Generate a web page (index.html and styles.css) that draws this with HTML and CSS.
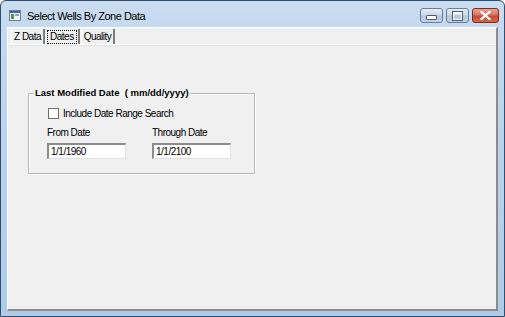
FILE: index.html
```html
<!DOCTYPE html>
<html>
<head>
  <title>Select Wells By Zone Data</title>
  <link rel="stylesheet" href="styles.css">
</head>
<body>
  <div class="window">
    <div class="titlebar">
      <svg class="app-icon" width="12" height="11" viewBox="0 0 12 11">
        <rect x="0.5" y="0.5" width="11" height="10" fill="#f4f6f8" stroke="#6c7c8c"/>
        <rect x="1" y="1" width="10" height="2" fill="#3a6ab0"/>
        <rect x="2" y="4" width="3" height="5" fill="#3f9a48"/>
        <rect x="6" y="4" width="4" height="2" fill="#8aa0b8"/>
      </svg>
      <span class="title">Select Wells By Zone Data</span>
      <div class="controls">
        <div class="ctl ctl-min"><span class="min-bar"></span></div>
        <div class="ctl ctl-max"><span class="max-box"></span></div>
        <div class="ctl ctl-close">
          <svg width="11" height="9" viewBox="0 0 11 9">
            <path d="M1.5 1 L9.5 8 M9.5 1 L1.5 8" stroke="#ffffff" stroke-width="2.2" stroke-linecap="square"/>
          </svg>
        </div>
      </div>
    </div>
    <div class="client">
      <div class="tabs">
        <div class="tab">Z Data</div>
        <div class="tab tab-active"><span class="focus">Dates</span></div>
        <div class="tab">Quality</div>
      </div>
      <div class="page">
        <fieldset class="group">
          <legend>Last Modified Date&nbsp; ( mm/dd/yyyy)</legend>
          <label class="check-row">
            <span class="checkbox"></span>
            Include Date Range Search
          </label>
          <div class="date-row">
            <div class="date-field">
              <div class="field-label">From Date</div>
              <div class="textbox">1/1/1960</div>
            </div>
            <div class="date-field">
              <div class="field-label">Through Date</div>
              <div class="textbox">1/1/2100</div>
            </div>
          </div>
        </fieldset>
      </div>
    </div>
  </div>
</body>
</html>
```

FILE: styles.css
```css
body {
  margin: 0;
  padding: 0;
  font-family: "Liberation Sans", Arial, sans-serif;
  font-size: 10px;
  letter-spacing: -0.5px;
  color: #000000;
  background-color: #ffffff;
}

.window {
  width: 505px;
  height: 317px;
  box-sizing: border-box;
  border: 1px solid #2f4d6c;
  border-radius: 6px 6px 0 0;
  background: linear-gradient(to bottom, #c9dcf0 0%, #bed5ed 30%, #afcbe8 100%);
  display: flex;
  flex-direction: column;
}

.titlebar {
  height: 25px;
  display: flex;
  align-items: center;
  padding-left: 8px;
  padding-right: 5px;
}

.app-icon {
  margin-top: 4px;
}

.title {
  margin-left: 6px;
  margin-top: 4px;
  font-size: 11px;
  letter-spacing: -0.5px;
}

.controls {
  margin-left: auto;
  display: flex;
  align-self: flex-start;
  margin-top: 7px;
  gap: 3px;
}

.ctl {
  height: 15px;
  box-sizing: border-box;
  border: 1px solid #6d7f95;
  border-radius: 3px;
  display: flex;
  align-items: center;
  justify-content: center;
  background: linear-gradient(to bottom, #e4edf7 0%, #c9d8ea 48%, #b3c7de 52%, #bfd2e8 100%);
}

.ctl-min,
.ctl-max {
  width: 23px;
}

.ctl-close {
  width: 27px;
  border-color: #7a2b20;
  background: linear-gradient(to bottom, #e8a494 0%, #d7705b 48%, #c64a2f 52%, #d2694c 100%);
}

.min-bar {
  width: 9px;
  height: 3px;
  margin-top: 4px;
  background-color: #ffffff;
  border: 1px solid #4c5d72;
  border-radius: 1px;
}

.max-box {
  width: 7px;
  height: 5px;
  border: 1px solid #ffffff;
  border-top-width: 2px;
  outline: 1px solid #4c5d72;
}

.client {
  flex: 1;
  margin: 1px 6px 5px 6px;
  background-color: #f0f0f0;
  border-top: 1px solid #ffffff;
  border-left: 1px solid #ffffff;
  border-right: 2px solid #8c8c8c;
  border-bottom: 2px solid #8c8c8c;
  display: flex;
  flex-direction: column;
}

.tabs {
  display: flex;
  height: 15px;
  padding-left: 3px;
  padding-top: 1px;
  border-bottom: 1px solid #ffffff;
}

.tab {
  display: flex;
  align-items: center;
  padding: 0 2px;
  margin-right: 1px;
  border-left: 1px solid #ffffff;
  border-right: 2px solid #7c7c7c;
}

.tab-active {
  padding: 0 1px 0 0;
}

.tab-active .focus {
  border: 1px dotted #000000;
  padding: 0 2px;
  line-height: 12px;
}

.page {
  flex: 1;
  padding: 41px 20px 0 20px;
  border-top: 1px solid #e3e3e3;
}

.group {
  width: 227px;
  height: 87px;
  margin: 0;
  padding: 0 0 0 19px;
  box-sizing: border-box;
  border: 1px solid #b7b7b7;
  box-shadow: inset 1px 1px 0 #ffffff, 1px 1px 0 #ffffff;
}

.group legend {
  font-weight: bold;
  font-size: 9.5px;
  letter-spacing: 0;
  padding: 0 1px;
  margin-left: -14px;
  line-height: 12px;
}

.check-row {
  display: flex;
  align-items: center;
  margin-top: 8px;
  height: 13px;
}

.checkbox {
  width: 11px;
  height: 11px;
  box-sizing: border-box;
  border: 1px solid #707070;
  background-color: #ffffff;
  margin-right: 4px;
}

.date-row {
  display: flex;
  gap: 26px;
  margin-top: 7px;
  margin-left: -1px;
}

.field-label {
  line-height: 12px;
  margin-bottom: 4px;
}

.textbox {
  width: 79px;
  height: 16px;
  box-sizing: border-box;
  padding-left: 2px;
  line-height: 13px;
  background-color: #ffffff;
  border-top: 2px solid #8c8c8c;
  border-left: 2px solid #8c8c8c;
  border-right: 1px solid #e0e0e0;
  border-bottom: 1px solid #e0e0e0;
}
```
